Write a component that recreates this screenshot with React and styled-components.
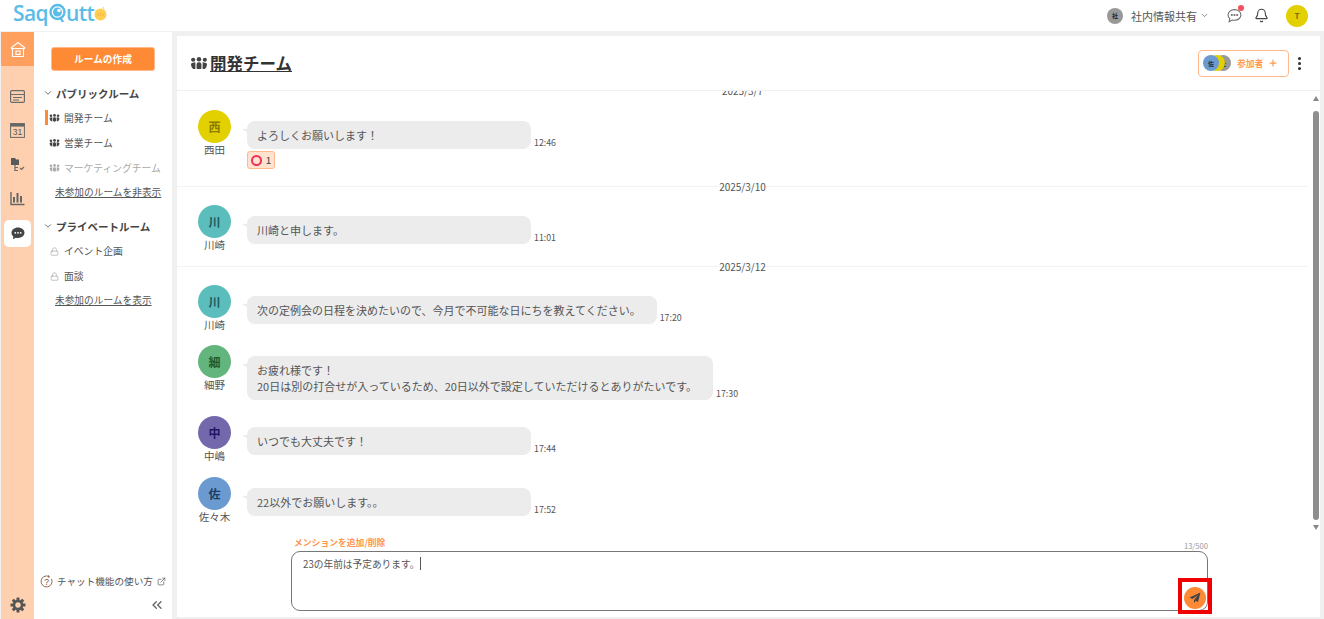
import React from "react";
import styled, { createGlobalStyle } from "styled-components";
import { ChevronDown, ExternalLink, ChevronsLeft, Lock, Plus, MoreVertical, Bell } from "lucide-react";

const Global = createGlobalStyle`
  html, body { margin: 0; padding: 0; height: 100%; overflow: hidden; background: #fff; }
  * { box-sizing: border-box; }
  body { font-family: "Noto Sans CJK JP", "Noto Sans", sans-serif; color: #555; }
`;

const Page = styled.div`display:flex;flex-direction:column;width:1324px;height:619px;background:#f0f0f0;`;
const Header = styled.header`height:31px;flex:none;background:#fff;display:flex;align-items:center;padding:0 16px 0 13px;`;
const Logo = styled.div`display:flex;align-items:center;font-family:"Open Sans",sans-serif;font-size:21px;font-weight:600;color:#5bbce8;letter-spacing:-.6px;line-height:1;margin-top:-5px;`;
const Spacer = styled.div`flex:1;`;
const Org = styled.div`display:flex;align-items:center;font-size:11px;color:#555;`;
const SmallAvatar = styled.span`width:16px;height:16px;border-radius:50%;background:#999;color:#222;font-size:6px;font-weight:700;display:flex;align-items:center;justify-content:center;margin-right:8px;`;
const HeaderIcons = styled.div`display:flex;align-items:center;margin-left:18px;gap:12px;`;
const NoticeWrap = styled.span`position:relative;display:flex;width:15px;height:15px;`;
const Dot = styled.span`position:absolute;right:-2px;top:-3px;width:6px;height:6px;border-radius:50%;background:#f25060;`;
const UserAvatar = styled.span`width:22px;height:22px;border-radius:50%;background:#e2d000;color:#7a6f00;font-size:8px;font-weight:700;display:flex;align-items:center;justify-content:center;margin-left:17px;`;

const Body = styled.div`flex:1;min-height:0;display:flex;padding-top:1px;`;
const Rail = styled.nav`width:33px;margin-left:1px;flex:none;background:#ffd0b0;display:flex;flex-direction:column;align-items:center;`;
const HomeItem = styled.div`width:100%;height:34px;background:#ffa05e;display:flex;align-items:center;justify-content:center;margin-bottom:17px;`;
const RailItem = styled.div`width:27px;height:27px;margin-bottom:7px;margin-top:${p => p.$active ? "1px" : "0"};display:flex;align-items:center;justify-content:center;border-radius:5px;background:${p => p.$active ? "#fff" : "transparent"};`;
const RailBottom = styled.div`margin-top:auto;height:22px;display:flex;align-items:flex-start;justify-content:center;`;

const Side = styled.aside`width:138px;flex:none;background:#fff;display:flex;flex-direction:column;margin-top:0;`;
const CreateBtn = styled.button`width:104px;height:24px;margin:15px 0 0 17px;border:1px solid #ffb98a;border-radius:3px;background:#ff8a35;color:#fff;font:700 9.700px "Noto Sans CJK JP",sans-serif;padding:0;`;
const SecTitle = styled.div`display:flex;align-items:center;height:16px;font-size:10.500px;font-weight:700;color:#444;margin:${p => p.$first ? "14px" : "18px"} 0 0 9px;gap:3px;`;
const RoomRow = styled.div`position:relative;display:flex;align-items:center;gap:4px;height:16px;margin:9px 0 0 15px;font-size:9.800px;color:${p => p.$muted ? "#aaa" : "#555"};`;
const Mark = styled.span`position:absolute;left:-4px;top:0;width:3px;height:15px;background:#ff8a35;`;
const SideLink = styled.div`margin:8px 0 0 21px;height:16px;line-height:16px;font-size:9.700px;color:#555;text-decoration:underline;`;
const SideBottom = styled.div`margin-top:auto;padding:0 6px 4px 6px;`;
const Help = styled.div`display:flex;align-items:center;font-size:9.600px;gap:4px;height:16px;color:#555;`;
const Collapse = styled.div`display:flex;justify-content:flex-end;margin-top:8px;padding-right:1px;height:18px;color:#666;`;

const Main = styled.main`flex:1;min-width:0;margin:4px 4px 2px 5px;background:#fff;display:flex;flex-direction:column;`;
const MainHead = styled.div`height:55px;flex:none;display:flex;align-items:center;padding:0 12px 0 13px;border-bottom:1px solid #f1f1f1;`;
const Title = styled.h1`margin:0 0 0 2px;font-size:16.500px;font-weight:700;line-height:22px;color:#333;text-decoration:underline;`;
const MemberBtn = styled.div`width:91px;height:27px;border:1px solid #ffb98a;border-radius:4px;display:flex;align-items:center;padding-left:4px;color:#ff9a50;font-size:8.800px;font-weight:700;`;
const Stack = styled.div`position:relative;width:33px;height:16px;`;
const StackAv = styled.span`position:absolute;top:0;left:${p => p.$x}px;width:16px;height:16px;border-radius:50%;background:${p => p.$c};color:#234;font-size:6px;font-weight:700;display:flex;align-items:center;justify-content:center;`;
const MoreWrap = styled.span`display:flex;margin-left:2px;color:#333;`;

const Chat = styled.div`flex:1;min-height:0;position:relative;overflow:hidden;display:flex;flex-direction:column;`;
const ScrollTrack = styled.div`position:absolute;right:0;top:0;bottom:85px;width:9px;display:flex;flex-direction:column;align-items:center;`;
const Thumb = styled.div`width:6px;border-radius:3px;background:#8e8e8e;position:absolute;top:20px;bottom:12px;`;
const Tri = styled.span`position:absolute;${p => p.$up ? "top:5px;border-bottom:5px solid #888;" : "bottom:2px;border-top:5px solid #888;"}border-left:3.500px solid transparent;border-right:3.500px solid transparent;`;
const Day = styled.div`position:relative;height:23px;margin-right:12px;margin-top:${p => p.$mt}px;`;
const FirstDay = styled(Day)`height:0;`;
const DayLine = styled.div`position:absolute;left:0;right:0;bottom:${p => p.$b}px;height:1px;background:#f3f3f3;`;
const DayLabel = styled.span`position:absolute;left:0;right:0;text-align:center;bottom:${p => p.$b}px;font-size:10px;line-height:14px;color:#555;`;
const MsgRow = styled.div`display:flex;padding-left:21px;margin-top:${p => p.$mt}px;`;
const Person = styled.div`width:33px;display:flex;flex-direction:column;align-items:center;flex:none;margin-right:16px;`;
const Avatar = styled.div`width:33px;height:33px;border-radius:50%;background:${p => p.$c};color:${p => p.$t};font-size:12px;font-weight:700;display:flex;align-items:center;justify-content:center;`;
const Name = styled.div`font-size:10.500px;line-height:14px;margin-top:0;margin-bottom:2px;white-space:nowrap;color:#555;`;
const Content = styled.div`padding-top:11px;`;
const BubbleLine = styled.div`display:flex;align-items:flex-end;`;
const Bubble = styled.div`position:relative;min-width:284px;padding:6px 16px 6px 10px;background:#ececec;border-radius:8px;font-size:11px;line-height:16px;color:#555;white-space:nowrap;
  &::before{content:"";position:absolute;left:-5px;top:8px;border-top:4px solid #ececec;border-left:6px solid transparent;}`;
const Time = styled.span`font-size:8.800px;line-height:12px;margin-left:3px;color:#555;`;
const Reaction = styled.div`margin-top:2px;width:28px;height:18px;background:#ffe3cf;border:1px solid #ffb98a;border-radius:3px;display:flex;align-items:center;justify-content:center;gap:4px;font-size:9.500px;font-weight:500;color:#555;`;
const Ring = styled.span`width:11px;height:11px;border:2px solid #f0305a;border-radius:50%;`;

const Composer = styled.div`position:absolute;left:114px;bottom:6px;width:917px;`;
const ComposerHead = styled.div`display:flex;justify-content:space-between;align-items:flex-end;height:16px;`;
const Mention = styled.span`font-size:8.800px;font-weight:700;color:#ff9550;margin-left:3px;line-height:14px;margin-bottom:1px;`;
const Count = styled.span`font-size:7.600px;color:#999;line-height:10px;`;
const InputBox = styled.div`position:relative;height:60px;border:1px solid #777;border-radius:9px;padding:5px 11px;font-size:9.700px;line-height:14px;color:#555;`;
const Caret = styled.span`display:inline-block;width:1px;height:13px;background:#555;margin-left:1px;vertical-align:-2px;`;
const SendWrap = styled.div`position:absolute;right:-5px;bottom:-4px;width:34px;height:36px;border:4px solid #f00000;display:flex;align-items:center;justify-content:center;padding-top:4px;`;
const SendBtn = styled.div`width:22px;height:22px;border-radius:50%;background:#ff8a35;display:flex;align-items:center;justify-content:center;`;

const Team = ({ c = "#444", w = 11 }) => (
  <svg width={w} height={w * 0.7} viewBox="0 0 20 14" fill={c}>
    <circle cx="3.500" cy="3" r="2.300" /><circle cx="10" cy="2.600" r="2.500" /><circle cx="16.500" cy="3" r="2.300" />
    <path d="M1 7.500q1.500-1.700 5-1.700v7.500H3.500Q1 11 1 7.500z" /><rect x="7.300" y="5.800" width="5.400" height="8.200" rx="2.400" /><path d="M19 7.500q-1.500-1.700-5-1.700v7.500h2.500Q19 11 19 7.500z" />
  </svg>
);
const Gear = () => (
  <svg width="16" height="16" viewBox="0 0 16 16">
    <g fill="#555">
      {[0, 45, 90, 135, 180, 225, 270, 315].map(a => (
        <rect key={a} x="6.500" y="0.500" width="3" height="4" rx=".5" transform={`rotate(${a} 8 8)`} />
      ))}
    </g>
    <circle cx="8" cy="8" r="4" fill="none" stroke="#555" strokeWidth="2.600" />
  </svg>
);
const S = { fill: "none", stroke: "#6b6b6b", strokeWidth: 1.2 };
const RoomLock = () => <Lock size={9} color="#999" strokeWidth={1.5} style={{ margin: "0 1px" }} />;

const Msg = ({ mt, c, t, k, name, time, children, reaction }) => (
  <MsgRow $mt={mt}>
    <Person><Avatar $c={c} $t={t}>{k}</Avatar><Name>{name}</Name></Person>
    <Content>
      <BubbleLine><Bubble>{children}</Bubble><Time>{time}</Time></BubbleLine>
      {reaction && <Reaction><Ring />1</Reaction>}
    </Content>
  </MsgRow>
);

export default function App() {
  return (
    <Page>
      <Global />
      <Header>
        <Logo>
          Saq
          <svg width="17" height="21" viewBox="0 0 17 21" style={{ margin: "0 0 0 1px" }}>
            <circle cx="8.500" cy="9" r="7" fill="none" stroke="#5bbce8" strokeWidth="2.400" />
            <circle cx="8.500" cy="9" r="4.500" fill="#5bbce8" /><circle cx="10" cy="7.500" r="1.800" fill="#fff" />
            <path d="M11 14l3 5" stroke="#5bbce8" strokeWidth="2.400" />
          </svg>
          utt
          <svg width="13" height="15" viewBox="0 0 13 15"><circle cx="6.500" cy="8.500" r="6" fill="#ffcf55" /><path d="M9 1l1 2" stroke="#ffcf55" /><path d="M4 7v3M6.500 7v3M9 7v3" stroke="#f2b23a" strokeWidth=".8" /></svg>
        </Logo>
        <Spacer />
        <Org><SmallAvatar>社</SmallAvatar>社内情報共有<ChevronDown size={9} color="#666" style={{ marginLeft: 3 }} /></Org>
        <HeaderIcons>
          <NoticeWrap>
            <svg width="15" height="15" viewBox="0 0 14 14" {...S} strokeWidth="1"><path d="M7 1.500c3.300 0 6 2.200 6 5s-2.700 5-6 5c-.8 0-1.500-.1-2.200-.3L2 12.700l.6-2.700C1.600 9.100 1 7.900 1 6.500c0-2.800 2.700-5 6-5z" /><circle cx="4.500" cy="6.500" r=".5" /><circle cx="7" cy="6.500" r=".5" /><circle cx="9.500" cy="6.500" r=".5" /></svg>
            <Dot />
          </NoticeWrap>
          <Bell size={15} color="#444" strokeWidth={1.8} />
        </HeaderIcons>
        <UserAvatar>T</UserAvatar>
      </Header>
      <Body>
        <Rail>
          <HomeItem>
            <svg width="16" height="17" viewBox="0 0 16 17" fill="none" stroke="#fff" strokeWidth="1.100"><path d="M1 7l7-5.500L15 7" /><path d="M2.500 7v8.500h11V7" /><path d="M1 7.500h14" /><rect x="6" y="10" width="4" height="3.500" /></svg>
          </HomeItem>
          <RailItem>
            <svg width="15" height="13" viewBox="0 0 15 13" {...S}><rect x=".6" y=".6" width="13.800" height="11.800" rx="1.200" /><path d="M.6 4.500h13.800M3 7.500h9M3 10h6" /></svg>
          </RailItem>
          <RailItem>
            <svg width="15" height="15" viewBox="0 0 15 15"><rect x=".6" y=".6" width="13.800" height="13.800" fill="none" stroke="#666" /><rect x=".6" y=".6" width="13.800" height="3" fill="#666" /><text x="7.500" y="12.300" textAnchor="middle" fontSize="8.500" fontFamily="Liberation Sans" fill="#555">31</text></svg>
          </RailItem>
          <RailItem>
            <svg width="15" height="15" viewBox="0 0 15 15"><path d="M1 1h4l1.200 1.500H9V8H1z" fill="#5a5a5a" /><path d="M5 8v5.500h3M5 10.500h3" {...S} /><path d="M10 11l1.500 1.500L14 10" {...S} /></svg>
          </RailItem>
          <RailItem>
            <svg width="15" height="15" viewBox="0 0 15 15" fill="#666"><rect x="3" y="6" width="2" height="5.500" /><rect x="6.500" y="2" width="2" height="9.500" /><rect x="10" y="5" width="2" height="6.500" /><path d="M1 1v12.500h13.500" fill="none" stroke="#666" strokeWidth="1.400" /></svg>
          </RailItem>
          <RailItem $active>
            <svg width="14" height="13" viewBox="0 0 14 13"><path d="M7 .5c3.600 0 6.500 2.300 6.500 5.300S10.600 11 7 11c-.8 0-1.500-.1-2.200-.3L1.800 12.300l.6-2.600C1.200 8.700.5 7.400.5 5.800.5 2.800 3.400.5 7 .5z" fill="#444" /><circle cx="4.300" cy="5.800" r=".9" fill="#fff" /><circle cx="7" cy="5.800" r=".9" fill="#fff" /><circle cx="9.700" cy="5.800" r=".9" fill="#fff" /></svg>
          </RailItem>
          <RailBottom><Gear /></RailBottom>
        </Rail>
        <Side>
          <CreateBtn>ルームの作成</CreateBtn>
          <SecTitle $first><ChevronDown size={10} strokeWidth={2} color="#555" />パブリックルーム</SecTitle>
          <RoomRow><Mark /><Team />開発チーム</RoomRow>
          <RoomRow><Team />営業チーム</RoomRow>
          <RoomRow $muted><Team c="#aaa" />マーケティングチーム</RoomRow>
          <SideLink>未参加のルームを非表示</SideLink>
          <SecTitle><ChevronDown size={10} strokeWidth={2} color="#555" />プライベートルーム</SecTitle>
          <RoomRow><RoomLock />イベント企画</RoomRow>
          <RoomRow><RoomLock />面談</RoomRow>
          <SideLink>未参加のルームを表示</SideLink>
          <SideBottom>
            <Help>
              <svg width="13" height="13" viewBox="0 0 13 13" fill="none" stroke="#9a6a45" strokeWidth="1"><path d="M9 1.500A5.500 5.500 0 1 0 11.500 4" /><path d="M8 .5l1.500 1-1 1.300" /><text x="6.500" y="9.800" textAnchor="middle" fontSize="8.500" fill="#7a5030" stroke="none" fontFamily="Liberation Sans">?</text></svg>
              チャット機能の使い方<ExternalLink size={9} color="#666" />
            </Help>
            <Collapse><ChevronsLeft size={16} strokeWidth={2} /></Collapse>
          </SideBottom>
        </Side>
        <Main>
          <MainHead>
            <Team c="#444" w={18} />
            <Title>開発チーム</Title>
            <Spacer />
            <MemberBtn>
              <Stack>
                <StackAv $x={12} $c="#999">社</StackAv>
                <StackAv $x={6} $c="#e2d000">T</StackAv>
                <StackAv $x={0} $c="#6a9ad0">佐</StackAv>
              </Stack>
              <span style={{ marginLeft: 1 }}>参加者</span>
              <Plus size={10} strokeWidth={3} style={{ marginLeft: 5 }} />
            </MemberBtn>
            <MoreWrap><MoreVertical size={17} strokeWidth={2.400} /></MoreWrap>
          </MainHead>
          <Chat>
            <FirstDay $mt={0}><DayLabel $b={-7}>2025/3/7</DayLabel></FirstDay>
            <Msg mt={19} c="#e2d000" t="#8a7d00" k="西" name="西田" time="12:46" reaction>よろしくお願いします！</Msg>
            <Day $mt={0}><DayLine $b={5} /><DayLabel $b={-2}>2025/3/10</DayLabel></Day>
            <Msg mt={13} c="#5cbdbd" t="#1d5c5c" k="川" name="川崎" time="11:01">川崎と申します。</Msg>
            <Day $mt={-10}><DayLine $b={0} /><DayLabel $b={-7}>2025/3/12</DayLabel></Day>
            <Msg mt={18} c="#5cbdbd" t="#1d5c5c" k="川" name="川崎" time="17:20">次の定例会の日程を決めたいので、今月で不可能な日にちを教えてください。</Msg>
            <Msg mt={11} c="#62b57d" t="#1c5c30" k="細" name="細野" time="17:30">お疲れ様です！<br />20日は別の打合せが入っているため、20日以外で設定していただけるとありがたいです。</Msg>
            <Msg mt={16} c="#7468ad" t="#1e1866" k="中" name="中嶋" time="17:44">いつでも大丈夫です！</Msg>
            <Msg mt={12} c="#6a9ad0" t="#1a3c66" k="佐" name="佐々木" time="17:52">22以外でお願いします。。</Msg>
            <ScrollTrack><Tri $up /><Thumb /><Tri /></ScrollTrack>
            <Composer>
              <ComposerHead><Mention>メンションを追加/削除</Mention><Count>13/500</Count></ComposerHead>
              <InputBox>
                23の年前は予定あります。<Caret />
                <SendWrap>
                  <SendBtn>
                    <svg width="12" height="12" viewBox="0 0 12 12" fill="#444"><path d="M11.500.5L.5 5.500l3 1.500L9 3 5 8v3l1.800-2.200L9 10z" /></svg>
                  </SendBtn>
                </SendWrap>
              </InputBox>
            </Composer>
          </Chat>
        </Main>
      </Body>
    </Page>
  );
}
